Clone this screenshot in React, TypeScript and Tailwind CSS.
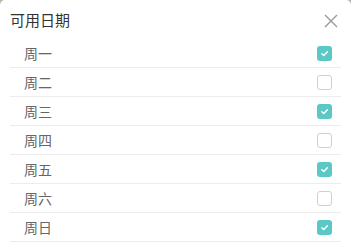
import React, { useState } from 'react';

const days = [
  { label: '周一', on: true },
  { label: '周二', on: false },
  { label: '周三', on: true },
  { label: '周四', on: false },
  { label: '周五', on: true },
  { label: '周六', on: false },
  { label: '周日', on: true },
];

const App: React.FC = () => {
  const [checked, setChecked] = useState(days.map((d) => d.on));

  const toggle = (i: number) => {
    setChecked(checked.map((c, j) => (j === i ? !c : c)));
  };

  return (
    <div className="w-[351px] h-[244px] bg-[#b5b5b5] overflow-hidden font-['Noto_Sans_CJK_SC',sans-serif]">
      <div className="h-full bg-white rounded-t-[5px]">
        {/* Header */}
        <div className="flex items-center justify-between h-[39px] pl-[10px] pr-[13px]">
          <span className="text-[15px] text-[#333] leading-none">可用日期</span>
          <button className="text-[#999] mt-[2px]">
            <svg width="14" height="14" viewBox="0 0 14 14" fill="none" stroke="currentColor" strokeWidth="1.4">
              <path d="M1 1 L13 13 M13 1 L1 13" />
            </svg>
          </button>
        </div>

        {/* Days */}
        <div className="px-[10px]">
          {days.map((d, i) => (
            <div
              key={d.label}
              className="flex items-center justify-between h-[29px] border-b border-[#ececec] pl-[14px] pr-[9px] cursor-pointer"
              onClick={() => toggle(i)}
            >
              <span className="text-[14px] text-[#666] leading-none">{d.label}</span>
              {checked[i] ? (
                <span className="w-[15px] h-[15px] rounded-[3px] bg-[#5bc8c6] flex items-center justify-center">
                  <svg width="9" height="9" viewBox="0 0 10 10" fill="none" stroke="white" strokeWidth="1.6" strokeLinecap="round" strokeLinejoin="round">
                    <path d="M2 5.2 L4.2 7.3 L8.2 3" />
                  </svg>
                </span>
              ) : (
                <span className="w-[15px] h-[15px] rounded-[3px] border border-[#d0d0d0] bg-white" />
              )}
            </div>
          ))}
        </div>
      </div>
    </div>
  );
};

export default App;
